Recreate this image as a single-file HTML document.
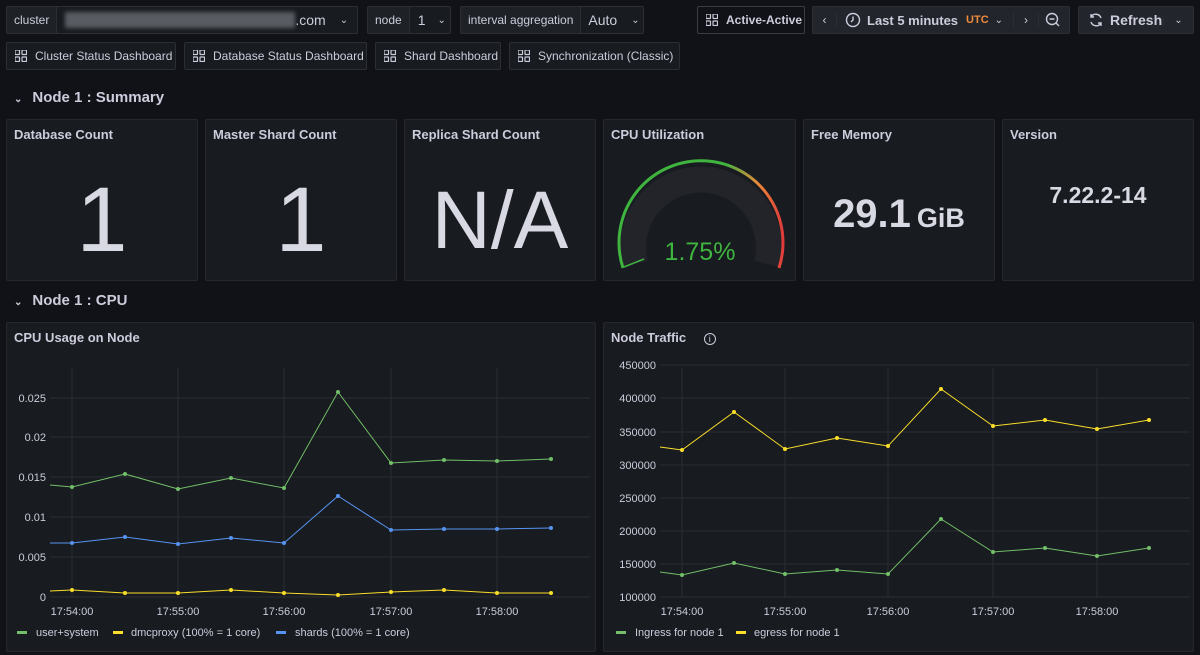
<!DOCTYPE html>
<html><head><meta charset="utf-8"><style>
*{box-sizing:border-box;margin:0;padding:0}
body{width:1200px;height:655px;background:#111217;font-family:"Liberation Sans",sans-serif;color:#ccccdc;position:relative;overflow:hidden;font-size:12px}
.a{position:absolute}
.btn{position:absolute;height:28px;border:1px solid #2c2e33;background:#181b1f;border-radius:2px;display:flex;align-items:center;font-size:12px;color:#ccccdc;white-space:nowrap;overflow:hidden}
.lbl{background:#1e2126;height:100%;display:flex;align-items:center;padding:0 7px;border-right:1px solid #2c2e33}
.panel{position:absolute;background:#181b1f;border:1px solid #25272c;border-radius:2px;overflow:hidden}
.pt{position:absolute;left:7px;top:7px;font-size:13px;color:#ccccdc;font-weight:bold}
.big{position:absolute;left:0;right:0;text-align:center;color:#d8d9e3}
.row{position:absolute;left:14px;font-size:15px;color:#ccccdc;font-weight:bold}
svg text{font-family:"Liberation Sans",sans-serif}
</style></head><body>
<svg width="0" height="0" style="position:absolute"><defs><g id="grid"><rect x="0" y="0" width="4.5" height="4.5" fill="none" stroke="#ccccdc" stroke-width="1.2" rx="0.5"/><rect x="7" y="0" width="4.5" height="4.5" fill="none" stroke="#ccccdc" stroke-width="1.2" rx="0.5"/><rect x="0" y="7" width="4.5" height="4.5" fill="none" stroke="#ccccdc" stroke-width="1.2" rx="0.5"/><rect x="7" y="7" width="4.5" height="4.5" fill="none" stroke="#ccccdc" stroke-width="1.2" rx="0.5"/></g></defs></svg>

<div class="btn" style="left:6px;top:6px;width:352px"><div class="lbl">cluster</div><div style="margin-left:8px;width:230px;height:16px;background:#5a5c63;filter:blur(2px)"></div><span style="font-size:14px">.com</span><span style="margin-left:14px;font-size:10px">⌄</span></div>
<div class="btn" style="left:367px;top:6px;width:84px"><div class="lbl">node</div><span style="margin-left:8px;font-size:14px">1</span><span style="margin-left:12px;font-size:10px">⌄</span></div>
<div class="btn" style="left:460px;top:6px;width:184px"><div class="lbl">interval aggregation</div><span style="margin-left:7px;font-size:14px">Auto</span><span style="margin-left:14px;font-size:10px">⌄</span></div>
<div class="btn" style="left:697px;top:6px;width:108px;background:#111217;border-color:#3a3c42"><svg width="12" height="12" style="margin:0 8px 0 8px"><use href="#grid"/></svg><b>Active-Active</b></div>
<div class="btn" style="left:812px;top:6px;width:258px;background:#22252b"><span style="width:24px;text-align:center;border-right:1px solid #2c2e33">‹</span>
<svg width="16" height="16" style="margin-left:8px;flex:none" viewBox="0 0 16 16"><circle cx="8" cy="8" r="6.5" fill="none" stroke="#ccccdc" stroke-width="1.4"/><path d="M8 4.5V8L6 10" fill="none" stroke="#ccccdc" stroke-width="1.4"/></svg>
<b style="font-size:13px;margin-left:6px">Last 5 minutes</b><b style="color:#f08b3c;font-size:11px;margin-left:8px">UTC</b><span style="font-size:10px;margin-left:6px">⌄</span>
<span style="width:26px;text-align:center;margin-left:10px;border-left:1px solid #2c2e33;border-right:1px solid #2c2e33">›</span>
<svg width="16" height="16" style="margin-left:6px;flex:none" viewBox="0 0 16 16"><circle cx="7" cy="7" r="5.5" fill="none" stroke="#ccccdc" stroke-width="1.4"/><path d="M4.5 7h5M11 11l3 3" stroke="#ccccdc" stroke-width="1.4"/></svg></div>
<div class="btn" style="left:1078px;top:6px;width:116px;background:#22252b"><svg width="16" height="16" style="margin-left:9px" viewBox="0 0 16 16"><path d="M13 6A5.5 5.5 0 0 0 3 5M3 10a5.5 5.5 0 0 0 10 1" fill="none" stroke="#ccccdc" stroke-width="1.4"/><path d="M3 2v3h3M13 14v-3h-3" fill="none" stroke="#ccccdc" stroke-width="1.4"/></svg><b style="font-size:14px;margin-left:6px">Refresh</b><span style="margin-left:auto;width:30px;text-align:center;border-left:1px solid #2c2e33;font-size:10px">⌄</span></div>

<div class="btn" style="left:6px;top:42px;width:170px"><svg width="12" height="12" style="margin:0 8px"><use href="#grid"/></svg>Cluster Status Dashboard</div>
<div class="btn" style="left:184px;top:42px;width:183px"><svg width="12" height="12" style="margin:0 8px"><use href="#grid"/></svg>Database Status Dashboard</div>
<div class="btn" style="left:375px;top:42px;width:126px"><svg width="12" height="12" style="margin:0 8px"><use href="#grid"/></svg>Shard Dashboard</div>
<div class="btn" style="left:509px;top:42px;width:171px"><svg width="12" height="12" style="margin:0 8px"><use href="#grid"/></svg>Synchronization (Classic)</div>

<div class="row" style="top:89px"><span style="font-size:10px;margin-right:10px">⌄</span>Node 1 : Summary</div>

<div class="panel" style="left:6px;top:119px;width:192px;height:162px"><div class="pt">Database Count</div><div class="big" style="top:48px;font-size:92px">1</div></div>
<div class="panel" style="left:205px;top:119px;width:192px;height:162px"><div class="pt">Master Shard Count</div><div class="big" style="top:48px;font-size:92px">1</div></div>
<div class="panel" style="left:404px;top:119px;width:192px;height:162px"><div class="pt">Replica Shard Count</div><div class="big" style="top:54px;font-size:82px">N/A</div></div>
<div class="panel" style="left:603px;top:119px;width:193px;height:162px"><div class="pt">CPU Utilization</div>
<svg class="a" style="left:0;top:0" width="193" height="162">
<defs><linearGradient id="g1" x1="0" y1="0" x2="1" y2="0"><stop offset="0.65" stop-color="#3fb43f"/><stop offset="0.85" stop-color="#e8893a"/><stop offset="1" stop-color="#e03b3b"/></linearGradient></defs>
<path d="M31 144 A68 68 0 1 1 163 144" fill="none" stroke="#222429" stroke-width="26"/>
<path d="M19 148 A82 82 0 1 1 175 148" fill="none" stroke="url(#g1)" stroke-width="3"/>
<path d="M20 147 L40 139" stroke="#3fb43f" stroke-width="1.5"/>
<text x="96" y="140" text-anchor="middle" font-size="25" fill="#3fb43f">1.75%</text>
</svg></div>
<div class="panel" style="left:803px;top:119px;width:192px;height:162px"><div class="pt">Free Memory</div><div class="big" style="top:72px;font-size:40px;font-weight:bold">29.1<span style="font-size:27px;margin-left:6px">GiB</span></div></div>
<div class="panel" style="left:1002px;top:119px;width:192px;height:162px"><div class="pt">Version</div><div class="big" style="top:62px;font-size:23px;font-weight:bold">7.22.2-14</div></div>

<div class="row" style="top:292px"><span style="font-size:10px;margin-right:10px">⌄</span>Node 1 : CPU</div>

<div class="panel" style="left:6px;top:322px;width:590px;height:330px"><div class="pt">CPU Usage on Node</div></div>
<div class="panel" style="left:603px;top:322px;width:591px;height:330px"><div class="pt">Node Traffic <span style="font-weight:normal;margin-left:14px;display:inline-block;width:12px;height:12px;border:1px solid #ccccdc;border-radius:50%;font-size:9px;text-align:center;line-height:11px">i</span></div></div>

<svg class="a" style="left:0;top:0" width="1200" height="655" font-size="11" fill="#ccccdc">
<g stroke="#2a2c31" stroke-width="1">
<path d="M72 368V598M178 368V598M284 368V598M391 368V598M497 368V598"/>
<path d="M50 398H590M50 437H590M50 477H590M50 517H590M50 557H590M50 597H590"/>
<path d="M682 368V598M785 368V598M888 368V598M993 368V598M1097 368V598"/>
<path d="M660 365H1190M660 398H1190M660 432H1190M660 465H1190M660 498H1190M660 531H1190M660 564H1190M660 597H1190"/>
</g>
<g text-anchor="end">
<text x="46" y="402">0.025</text><text x="46" y="441">0.02</text><text x="46" y="481">0.015</text><text x="46" y="521">0.01</text><text x="46" y="561">0.005</text><text x="46" y="601">0</text>
<text x="656" y="369">450000</text><text x="656" y="402">400000</text><text x="656" y="436">350000</text><text x="656" y="469">300000</text><text x="656" y="502">250000</text><text x="656" y="535">200000</text><text x="656" y="568">150000</text><text x="656" y="601">100000</text>
</g>
<g text-anchor="middle">
<text x="72" y="615">17:54:00</text><text x="178" y="615">17:55:00</text><text x="284" y="615">17:56:00</text><text x="391" y="615">17:57:00</text><text x="497" y="615">17:58:00</text>
<text x="682" y="615">17:54:00</text><text x="785" y="615">17:55:00</text><text x="888" y="615">17:56:00</text><text x="993" y="615">17:57:00</text><text x="1097" y="615">17:58:00</text>
</g>
<g fill="none" stroke-width="1">
<polyline stroke="#73bf69" points="50,485 72,487 125,474 178,489 231,478 284,488 338,392 391,463 444,460 497,461 551,459"/>
<polyline stroke="#5794f2" points="50,543 72,543 125,537 178,544 231,538 284,543 338,496 391,530 444,529 497,529 551,528"/>
<polyline stroke="#fade2a" points="50,591 72,590 125,593 178,593 231,590 284,593 338,595 391,592 444,590 497,593 551,593"/>
<polyline stroke="#fade2a" points="660,447 682,450 734,412 785,449 837,438 888,446 941,389 993,426 1045,420 1097,429 1149,420"/>
<polyline stroke="#73bf69" points="660,572 682,575 734,563 785,574 837,570 888,574 941,519 993,552 1045,548 1097,556 1149,548"/>
</g>
<g fill="#73bf69"><circle cx="72" cy="487" r="2"/><circle cx="125" cy="474" r="2"/><circle cx="178" cy="489" r="2"/><circle cx="231" cy="478" r="2"/><circle cx="284" cy="488" r="2"/><circle cx="338" cy="392" r="2"/><circle cx="391" cy="463" r="2"/><circle cx="444" cy="460" r="2"/><circle cx="497" cy="461" r="2"/><circle cx="551" cy="459" r="2"/>
<circle cx="682" cy="575" r="2"/><circle cx="734" cy="563" r="2"/><circle cx="785" cy="574" r="2"/><circle cx="837" cy="570" r="2"/><circle cx="888" cy="574" r="2"/><circle cx="941" cy="519" r="2"/><circle cx="993" cy="552" r="2"/><circle cx="1045" cy="548" r="2"/><circle cx="1097" cy="556" r="2"/><circle cx="1149" cy="548" r="2"/></g>
<g fill="#5794f2"><circle cx="72" cy="543" r="2"/><circle cx="125" cy="537" r="2"/><circle cx="178" cy="544" r="2"/><circle cx="231" cy="538" r="2"/><circle cx="284" cy="543" r="2"/><circle cx="338" cy="496" r="2"/><circle cx="391" cy="530" r="2"/><circle cx="444" cy="529" r="2"/><circle cx="497" cy="529" r="2"/><circle cx="551" cy="528" r="2"/></g>
<g fill="#fade2a"><circle cx="72" cy="590" r="2"/><circle cx="125" cy="593" r="2"/><circle cx="178" cy="593" r="2"/><circle cx="231" cy="590" r="2"/><circle cx="284" cy="593" r="2"/><circle cx="338" cy="595" r="2"/><circle cx="391" cy="592" r="2"/><circle cx="444" cy="590" r="2"/><circle cx="497" cy="593" r="2"/><circle cx="551" cy="593" r="2"/>
<circle cx="682" cy="450" r="2"/><circle cx="734" cy="412" r="2"/><circle cx="785" cy="449" r="2"/><circle cx="837" cy="438" r="2"/><circle cx="888" cy="446" r="2"/><circle cx="941" cy="389" r="2"/><circle cx="993" cy="426" r="2"/><circle cx="1045" cy="420" r="2"/><circle cx="1097" cy="429" r="2"/><circle cx="1149" cy="420" r="2"/></g>
<rect x="17" y="631" width="10" height="3" fill="#73bf69"/><text x="36" y="636">user+system</text>
<rect x="113" y="631" width="10" height="3" fill="#fade2a"/><text x="131" y="636">dmcproxy (100% = 1 core)</text>
<rect x="276" y="631" width="10" height="3" fill="#5794f2"/><text x="295" y="636">shards (100% = 1 core)</text>
<rect x="616" y="631" width="10" height="3" fill="#73bf69"/><text x="635" y="636">Ingress for node 1</text>
<rect x="736" y="631" width="10" height="3" fill="#fade2a"/><text x="754" y="636">egress for node 1</text>
</svg>
</body></html>
